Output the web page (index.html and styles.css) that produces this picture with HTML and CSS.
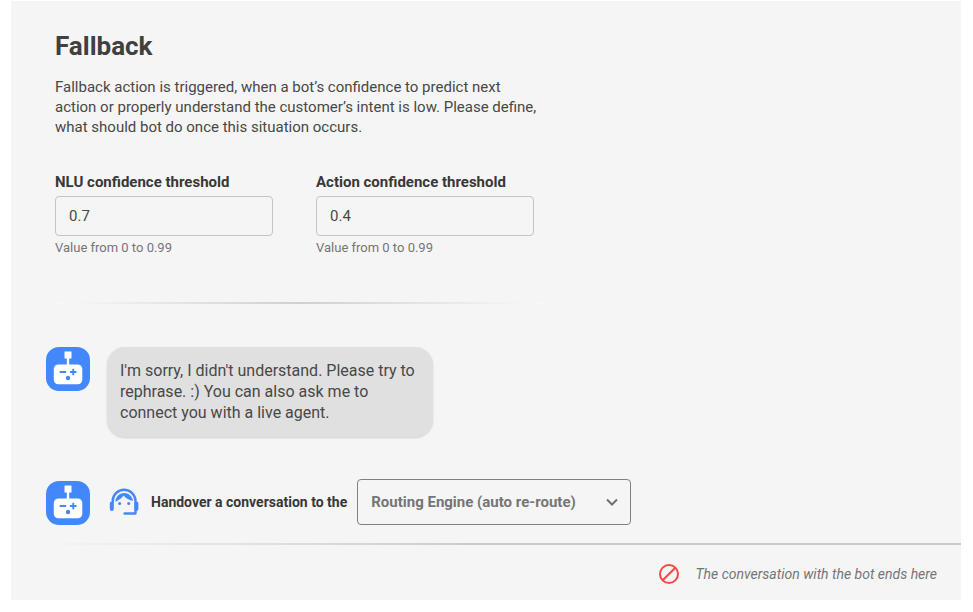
FILE: index.html
```html
<!DOCTYPE html>
<html lang="en">
<head>
<meta charset="utf-8">
<meta name="viewport" content="width=device-width, initial-scale=1">
<title>Fallback</title>
<link rel="stylesheet" href="styles.css">
</head>
<body>
<svg class="sprite" aria-hidden="true">
  <symbol id="bot" viewBox="0 0 44 44">
    <rect width="44" height="44" rx="13" fill="#4387fd"/>
    <g fill="#fff">
      <rect x="18.500" y="4.500" width="7" height="7"/>
      <rect x="20.800" y="11" width="2.400" height="7"/>
      <rect x="7.800" y="17.500" width="28.500" height="19.800" rx="4.500"/>
    </g>
    <g fill="none" stroke="#4387fd" stroke-width="1.900">
      <path d="M13.700 25h6.500M24 25h6.500M27.250 21.700v6.600"/>
    </g>
    <circle cx="22" cy="31" r="2.200" fill="#4387fd"/>
  </symbol>
</svg>
<main class="panel">
  <section class="settings">
    <h1 class="title">Fallback</h1>
    <p class="intro">Fallback action is triggered, when a bot’s confidence to predict next<br>action or properly understand the customer’s intent is low. Please define,<br>what should bot do once this situation occurs.</p>
    <div class="fields">
      <div class="field">
        <label class="label" for="nlu">NLU confidence threshold</label>
        <input class="input" id="nlu" type="text" inputmode="decimal" value="0.7" aria-describedby="nlu-hint">
        <span class="hint" id="nlu-hint">Value from 0 to 0.99</span>
      </div>
      <div class="field">
        <label class="label" for="action">Action confidence threshold</label>
        <input class="input" id="action" type="text" inputmode="decimal" value="0.4" aria-describedby="action-hint">
        <span class="hint" id="action-hint">Value from 0 to 0.99</span>
      </div>
    </div>
    <hr class="divider">
  </section>
  <section class="message">
    <svg class="bot" aria-hidden="true"><use href="#bot"/></svg>
    <p class="bubble">I'm sorry, I didn't understand. Please try to<br>rephrase. :) You can also ask me to<br>connect you with a live agent.</p>
  </section>
  <section class="handover">
    <svg class="bot" aria-hidden="true"><use href="#bot"/></svg>
    <svg class="agent" viewBox="0 0 30 28" aria-hidden="true">
      <path d="M3.700 14v-1a11.400 11.200 0 0 1 22.800 0v12.500H15.500" fill="none" stroke="#4387fd" stroke-width="2.400" stroke-linecap="round" stroke-linejoin="round"/>
      <rect x="0.800" y="13.500" width="4" height="9.500" rx="2" fill="#4387fd"/>
      <rect x="25.400" y="13.500" width="4" height="9.500" rx="2" fill="#4387fd"/>
      <path d="M6.300 13.800C6.500 9 10.500 5 15 5S23.500 8.500 24 12.800C20.500 12.300 16.700 10.300 14.500 7.500C13 10.500 9.500 12 6.300 13.800Z" fill="#4387fd"/>
      <circle cx="10.700" cy="15.500" r="1.500" fill="#4387fd"/>
      <circle cx="19.700" cy="15.500" r="1.500" fill="#4387fd"/>
    </svg>
    <label class="label" for="target">Handover a conversation to the</label>
    <div class="picker">
      <select class="select" id="target"><option>Routing Engine (auto re-route)</option></select>
      <svg class="chevron" viewBox="0 0 12 8" aria-hidden="true"><path d="M1 1.500l5 5 5-5"/></svg>
    </div>
  </section>
  <footer class="ending">
    <svg class="stop" viewBox="0 0 20 20" aria-hidden="true"><circle cx="10" cy="10" r="9"/><path d="M3.700 16.300L16.300 3.700"/></svg>
    <span>The conversation with the bot ends here</span>
  </footer>
</main>
</body>
</html>
```
FILE: styles.css
```css
* { box-sizing: border-box; }

body {
  margin: 0;
  background: #fff;
  color: #484848;
  font-family: Roboto, "Liberation Sans", sans-serif;
  font-size: 15px;
  line-height: 20px;
}

.sprite { position: absolute; width: 0; height: 0; }

.panel {
  margin: 1px 12px 12px 11px;
  background: #f5f5f5;
}

.settings { padding: 28px 44px 0; }

.title {
  margin: 0 0 14px;
  color: #404040;
  font-size: 26px;
  line-height: 34px;
  font-weight: 700;
}

.intro { margin: 0 0 35px; }

.fields { display: flex; gap: 43px; }

.field {
  display: flex;
  flex-direction: column;
  width: 218px;
}

.label { font-weight: 700; color: #383838; white-space: nowrap; }

.input {
  width: 100%;
  height: 40px;
  margin: 4px 0 2px;
  padding: 0 13px;
  border: 1px solid #c4c4c4;
  border-radius: 4px;
  background: transparent;
  color: #484848;
  font: inherit;
}

.hint { font-size: 13px; color: #757575; }

.divider {
  width: 100%;
  max-width: 490px;
  height: 2px;
  margin: 44px 0 0;
  border: 0;
  background: linear-gradient(90deg, #f8f8f8, #d0d0d0 50%, #f8f8f8);
}

.message {
  display: flex;
  align-items: flex-start;
  gap: 17px;
  padding: 43px 35px 42px;
}

.bot { flex: none; width: 44px; height: 44px; }

.bubble {
  margin: 0;
  padding: 13px 18px 14px 13px;
  border-radius: 18px;
  background: #e0e0e0;
  box-shadow: 0 1px 2px rgba(0, 0, 0, 0.15);
  font-size: 16px;
  line-height: 21px;
}

.handover {
  display: flex;
  align-items: center;
  padding: 0 35px 18px;
}

.handover .bot { align-self: flex-end; }

.handover .label { font-size: 14px; }

.agent { flex: none; width: 30px; height: 28px; margin: 0 12px 0 19px; }

.picker { position: relative; width: 274px; margin-left: 10px; }

.select {
  appearance: none;
  display: block;
  width: 100%;
  height: 46px;
  padding: 0 40px 0 13px;
  border: 1px solid #808080;
  border-radius: 4px;
  background: transparent;
  color: #757575;
  font: inherit;
  font-weight: 700;
}

.chevron {
  position: absolute;
  top: 19px;
  right: 13px;
  width: 12px;
  height: 8px;
  fill: none;
  stroke: #707070;
  stroke-width: 2;
  pointer-events: none;
}

.ending {
  display: flex;
  align-items: center;
  justify-content: flex-end;
  gap: 16px;
  padding: 19px 24px 16px;
  border-top: 2px solid;
  border-image: linear-gradient(90deg, #f8f8f8, #cacaca 50%) 2;
  color: #757575;
  font-size: 14px;
  font-style: italic;
}

.stop {
  width: 20px;
  height: 20px;
  fill: none;
  stroke: #f44747;
  stroke-width: 2;
}
```
